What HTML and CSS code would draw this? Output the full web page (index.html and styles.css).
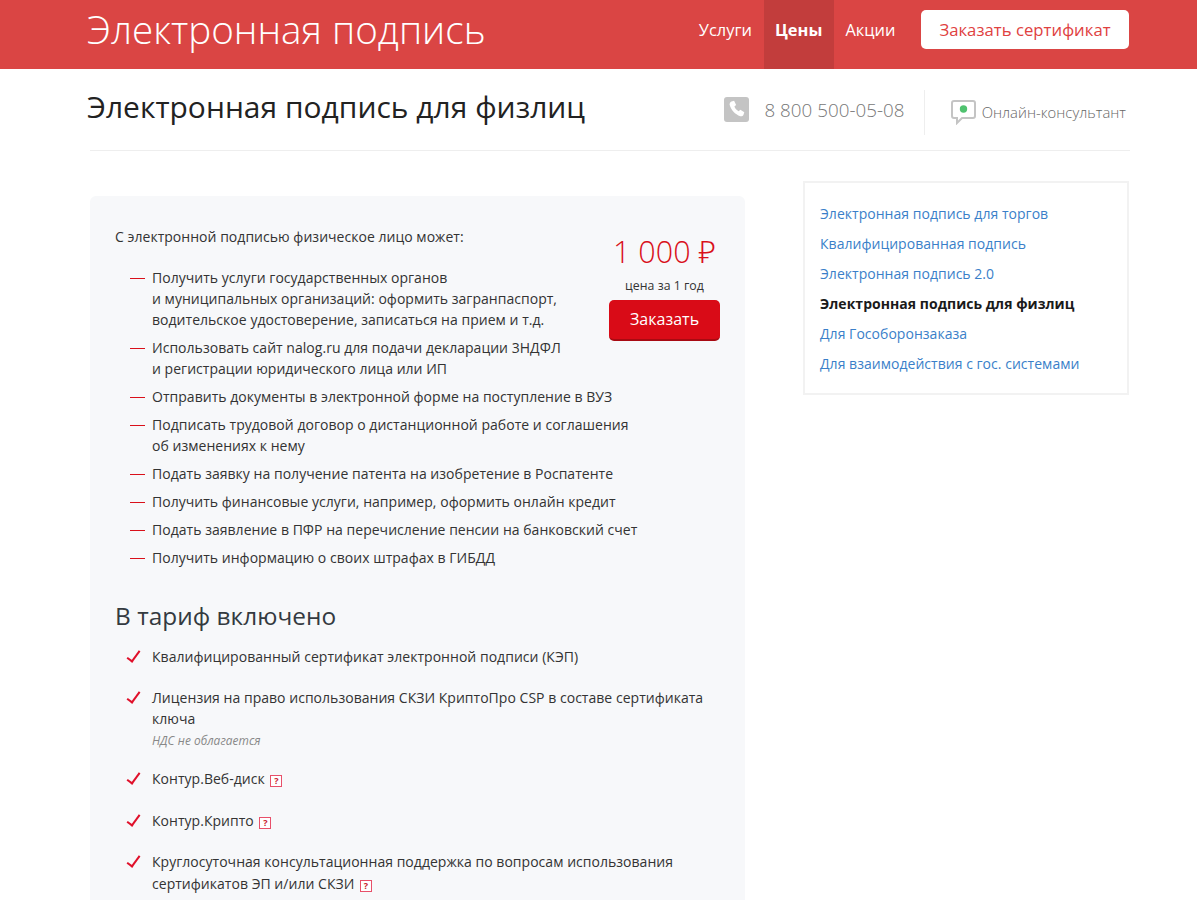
FILE: index.html
```html
<!DOCTYPE html>
<html lang="ru">
<head>
    <meta charset="UTF-8">
    <title>Электронная подпись для физлиц</title>
    <link rel="stylesheet" href="styles.css">
</head>
<body>
    <header class="topbar">
        <a class="logo" href="#">Электронная подпись</a>
        <nav class="topnav">
            <a href="#">Услуги</a>
            <a href="#" class="active">Цены</a>
            <a href="#">Акции</a>
        </nav>
        <a href="#" class="order-cert">Заказать сертификат</a>
    </header>

    <section class="page-head">
        <h1>Электронная подпись для физлиц</h1>
        <div class="contacts">
            <div class="phone">
                <svg width="25" height="25" viewBox="0 0 25 25">
                    <rect width="25" height="25" rx="3" fill="#c4c4c4"/>
                    <path d="M7.5 4.5l2.6-.8 2 4.2-1.7 1.6c.7 1.9 2.300 3.700 4.200 4.800l1.800-1.500 3.900 2.500-.9 2.600c-.5 1.200-1.900 1.700-3.100 1.300C11 17.300 7 13 5.700 8c-.4-1.500.5-3 1.800-3.500z" fill="#fff"/>
                </svg>
                <span>8 800 500-05-08</span>
            </div>
            <a href="#" class="consultant">
                <svg width="25" height="25" viewBox="0 0 25 25">
                    <path d="M3 1h19a2 2 0 0 1 2 2v13a2 2 0 0 1-2 2H11l-5 5v-5H3a2 2 0 0 1-2-2V3a2 2 0 0 1 2-2z" fill="#fff" stroke="#c4c4c4" stroke-width="2"/>
                    <circle cx="12.500" cy="9" r="3.700" fill="#4fc26f"/>
                </svg>
                <span>Онлайн-консультант</span>
            </a>
        </div>
    </section>

    <main class="content">
        <article class="tariff">
            <div class="price-box">
                <div class="price">1 000 ₽</div>
                <div class="price-note">цена за 1 год</div>
                <a href="#" class="order-btn">Заказать</a>
            </div>

            <p class="intro">С электронной подписью физическое лицо может:</p>
            <ul class="dash-list">
                <li>Получить услуги государственных органов<br>и муниципальных организаций: оформить загранпаспорт,<br>водительское удостоверение, записаться на прием и т.д.</li>
                <li>Использовать сайт nalog.ru для подачи декларации 3НДФЛ<br>и регистрации юридического лица или ИП</li>
                <li>Отправить документы в электронной форме на поступление в ВУЗ</li>
                <li>Подписать трудовой договор о дистанционной работе и соглашения<br>об изменениях к нему</li>
                <li>Подать заявку на получение патента на изобретение в Роспатенте</li>
                <li>Получить финансовые услуги, например, оформить онлайн кредит</li>
                <li>Подать заявление в ПФР на перечисление пенсии на банковский счет</li>
                <li>Получить информацию о своих штрафах в ГИБДД</li>
            </ul>

            <h2>В тариф включено</h2>
            <ul class="check-list">
                <li>Квалифицированный сертификат электронной подписи (КЭП)</li>
                <li>Лицензия на право использования СКЗИ КриптоПро CSP в составе сертификата<br>ключа<small>НДС не облагается</small></li>
                <li class="tall">Контур.Веб-диск <a href="#" class="hint">?</a></li>
                <li>Контур.Крипто <a href="#" class="hint">?</a></li>
                <li class="tall">Круглосуточная консультационная поддержка по вопросам использования<br>сертификатов ЭП и/или СКЗИ <a href="#" class="hint">?</a></li>
            </ul>
        </article>

        <aside class="side-menu">
            <a href="#">Электронная подпись для торгов</a>
            <a href="#">Квалифицированная подпись</a>
            <a href="#">Электронная подпись 2.0</a>
            <a href="#" class="current">Электронная подпись для физлиц</a>
            <a href="#">Для Гособоронзаказа</a>
            <a href="#">Для взаимодействия с гос. системами</a>
        </aside>
    </main>
</body>
</html>
```

FILE: styles.css
```css
html, body {
    height: 900px;
    overflow: hidden;
}

body {
    margin: 0;
    font-family: 'Open Sans', 'Noto Sans', sans-serif;
    font-size: 14px;
    line-height: 21px;
    letter-spacing: 0.03px;
    color: #333;
    background-color: #fff;
}

a {
    text-decoration: none;
}

/* top red bar */
.topbar {
    height: 69px;
    display: flex;
    align-items: stretch;
    padding: 0 68px 0 87px;
    background-color: #da4544;
    color: #fff;
}

.logo {
    margin-right: auto;
    font-size: 38.6px;
    font-weight: 300;
    line-height: 58px;
    color: #fff;
}

.topnav {
    display: flex;
    margin-right: 14px;
}

.topnav a {
    padding: 0 11.5px;
    font-size: 16.4px;
    line-height: 60px;
    color: #fff;
}

.topnav a.active {
    font-weight: 700;
    background-color: #c23d3c;
}

.order-cert {
    align-self: flex-start;
    width: 208px;
    height: 39px;
    margin-top: 10px;
    border-radius: 5px;
    font-size: 16.7px;
    line-height: 39px;
    text-align: center;
    color: #e0413f;
    background-color: #fff;
}

/* page title row */
.page-head {
    height: 81px;
    display: flex;
    justify-content: space-between;
    margin: 0 67px 0 90px;
    border-bottom: 1px solid #eee;
}

.page-head h1 {
    margin: 16px 0 0 -3px;
    font-size: 29.95px;
    font-weight: 400;
    line-height: 44px;
    color: #222;
}

.contacts {
    display: flex;
    height: 45px;
    margin-top: 21px;
}

.phone {
    display: flex;
    align-items: center;
    gap: 15px;
    padding-right: 19px;
    border-right: 1px solid #eee;
    font-size: 18.8px;
    font-weight: 300;
    color: #777;
}

.phone svg {
    margin-top: -6px;
}

.phone span {
    margin-top: -5px;
}

.consultant {
    display: flex;
    align-items: center;
    gap: 6px;
    padding: 0 4px 0 26px;
    font-size: 14.8px;
    font-weight: 300;
    color: #666;
}

/* main columns */
.content {
    display: flex;
    align-items: flex-start;
    padding: 30px 68px 0 90px;
}

.tariff {
    width: 605px;
    height: 674px;
    margin-top: 15px;
    padding: 30px 25px 0;
    border-radius: 6px 6px 0 0;
    background-color: #f7f8fa;
}

.price-box {
    float: right;
    width: 111px;
    margin: 4px 0 0 20px;
    text-align: center;
}

.price {
    font-size: 30.5px;
    font-weight: 300;
    line-height: 42px;
    white-space: nowrap;
    color: #d9101a;
}

.price-note {
    margin-top: 2px;
    font-size: 12.3px;
    line-height: 24px;
}

.order-btn {
    display: block;
    height: 39px;
    margin-top: 2px;
    border-bottom: 2px solid #a80a12;
    border-radius: 5px;
    font-size: 16px;
    line-height: 39px;
    color: #fff;
    background-color: #d90b17;
}

.intro {
    margin: 0 0 20px;
}

.dash-list,
.check-list {
    margin: 0;
    padding: 0 0 0 37px;
    list-style: none;
}

.dash-list li {
    position: relative;
    margin-bottom: 7px;
}

.dash-list li::before {
    content: "";
    position: absolute;
    top: 11px;
    left: -22px;
    width: 15px;
    height: 1px;
    background-color: #d9101a;
}

.tariff h2 {
    margin: 32px 0 14px;
    font-size: 24.4px;
    font-weight: 400;
    line-height: 32px;
    color: #343a40;
}

.check-list li {
    position: relative;
    margin-bottom: 20px;
}

.check-list li:last-child {
    margin-bottom: 0;
}

.check-list li.tall {
    line-height: 22px;
}

.check-list li::before {
    content: "";
    position: absolute;
    top: 2px;
    left: -22px;
    width: 5px;
    height: 12px;
    border-right: 2px solid #e0102a;
    border-bottom: 2px solid #e0102a;
    transform: rotate(36deg);
}

.check-list small {
    display: block;
    margin-bottom: -3px;
    font-size: 11.9px;
    font-style: italic;
    line-height: 22px;
    color: #888;
}

.hint {
    display: inline-block;
    width: 10px;
    height: 10px;
    margin-left: 2px;
    border: 1px solid #e8506a;
    font-size: 9px;
    font-weight: 700;
    line-height: 10px;
    text-align: center;
    color: #c8202a;
    background-color: #fff;
}

/* right side menu */
.side-menu {
    width: 292px;
    margin-left: 58px;
    padding: 16px 15px 14px;
    border: 2px solid #f2f2f2;
}

.side-menu a {
    display: block;
    font-size: 14px;
    line-height: 30px;
    color: #3a7fc9;
}

.side-menu a.current {
    font-weight: 700;
    color: #1a1a1a;
}
```
